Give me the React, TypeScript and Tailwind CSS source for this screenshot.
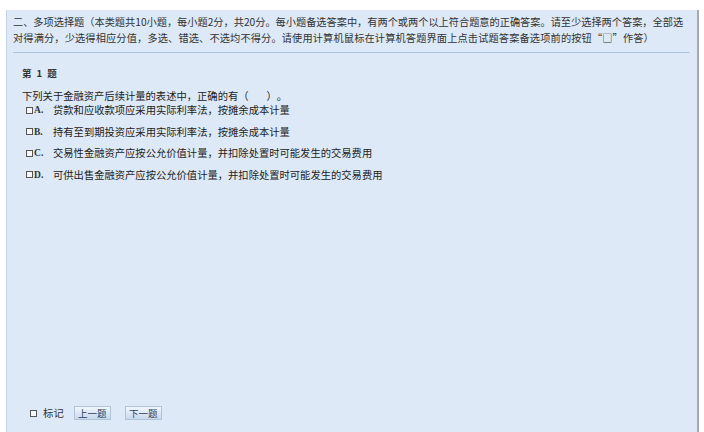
import React from 'react';

const options = [
  { key: 'A', text: '贷款和应收款项应采用实际利率法，按摊余成本计量' },
  { key: 'B', text: '持有至到期投资应采用实际利率法，按摊余成本计量' },
  { key: 'C', text: '交易性金融资产应按公允价值计量，并扣除处置时可能发生的交易费用' },
  { key: 'D', text: '可供出售金融资产应按公允价值计量，并扣除处置时可能发生的交易费用' },
];

const Box: React.FC = () => (
  <span className="inline-block w-[7px] h-[7px] border border-[#555] bg-[#f4f8fc]" />
);

const App: React.FC = () => {
  return (
    <div
      className="w-full h-[432px] bg-white pt-[10px] pl-[6px] pr-[5px] [text-spacing-trim:space-all]"
      style={{ fontFamily: '"Noto Sans CJK SC", "Noto Sans", sans-serif' }}
    >
      <div className="h-[422px] bg-[#dde9f6] border-l border-l-[#c3d5ea] border-r-2 border-r-[#a6a9ad] flex flex-col">
        {/* header */}
        <div className="ml-[6px] mr-[7px] pt-[4px] pb-[6px] border-b border-[#aac3e2] text-[10.2px] leading-[16px] text-[#333] whitespace-nowrap">
          <div>二、多项选择题（本类题共10小题，每小题2分，共20分。每小题备选答案中，有两个或两个以上符合题意的正确答案。请至少选择两个答案，全部选</div>
          <div className="tracking-[0.15px]">对得满分，少选得相应分值，多选、错选、不选均不得分。请使用计算机鼠标在计算机答题界面上点击试题答案备选项前的按钮“□”作答）</div>
        </div>

        <div className="pl-[15px] mt-[13px] text-[9.5px] leading-[14px] font-bold text-[#333] flex">
          <span>第</span>
          <span className="mx-[5px]">1</span>
          <span>题</span>
        </div>

        <div className="pl-[15px] mt-[9px] text-[10.3px] leading-[14px] text-[#222] flex">
          <span>下列关于金融资产后续计量的表述中，正确的有（</span>
          <span className="inline-block w-[18px]" />
          <span>）。</span>
        </div>

        <div className="pl-[19px] flex flex-col gap-[7.5px] text-[10.3px] leading-[14px] text-[#222]">
          {options.map((o) => (
            <div key={o.key} className="flex items-center">
              <Box />
              <span
                className="w-[20px] pl-[1px] text-[9.5px] font-bold text-[#333]"
                style={{ fontFamily: '"Liberation Serif", serif' }}
              >
                {o.key}.
              </span>
              <span>{o.text}</span>
            </div>
          ))}
        </div>

        {/* footer */}
        <div className="mt-auto mb-[12px] pl-[23px] flex items-center h-[14px] text-[10.4px] text-[#333]">
          <Box />
          <span className="ml-[6px]">标记</span>
          <button className="ml-[10px] w-[37px] h-[14px] border border-[#b2c4da] bg-gradient-to-b from-[#f3f7fc] to-[#c8d8ec] text-[9.5px] leading-[12px] text-[#2c3e5c]">
            上一题
          </button>
          <button className="ml-[14px] w-[37px] h-[14px] border border-[#b2c4da] bg-gradient-to-b from-[#f3f7fc] to-[#c8d8ec] text-[9.5px] leading-[12px] text-[#2c3e5c]">
            下一题
          </button>
        </div>
      </div>
    </div>
  );
};

export default App;
